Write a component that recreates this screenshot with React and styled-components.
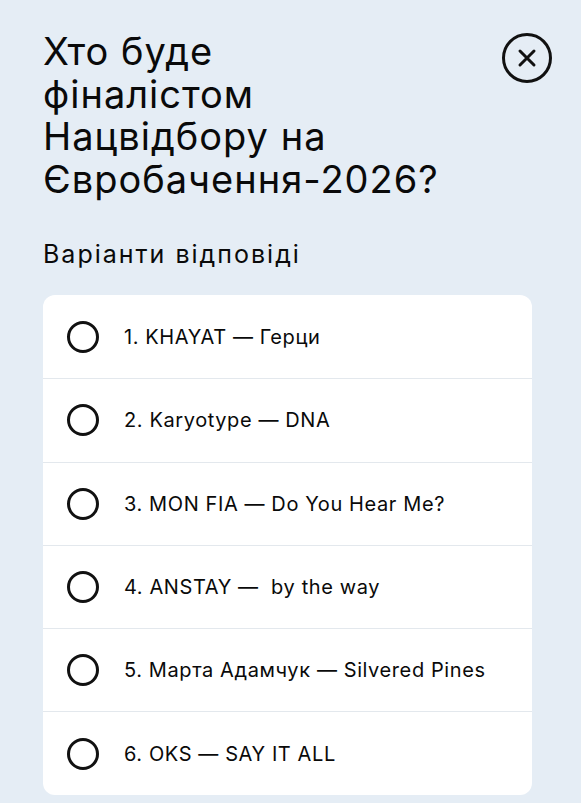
import React from 'react';
import styled, { createGlobalStyle } from 'styled-components';

const GlobalStyle = createGlobalStyle`
  html, body {
    margin: 0;
    padding: 0;
    background: #e5edf5;
  }
  body {
    font-family: Inter, "Noto Sans", "Liberation Sans", sans-serif;
    color: #0a0a0a;
  }
`

const Page = styled.div`
  width: 581px;
  height: 803px;
  box-sizing: border-box;
  padding: 30px 29px 0 43px;
  display: flex;
  flex-direction: column;
  overflow: hidden;
`

const Header = styled.div`
  display: flex;
  justify-content: space-between;
  align-items: flex-start;
`

const Title = styled.h1`
  margin: 0;
  font-size: 38px;
  line-height: 42.5px;
  font-weight: 400;
  letter-spacing: 1px;
`

const CloseButton = styled.button`
  width: 50px;
  height: 50px;
  margin-top: 3px;
  padding: 0;
  border: 3px solid #111;
  border-radius: 50%;
  background: transparent;
  display: flex;
  align-items: center;
  justify-content: center;
  box-sizing: border-box;
  cursor: pointer;
`

const Subtitle = styled.h2`
  margin: 39px 0 0;
  font-size: 25px;
  line-height: 30px;
  font-weight: 400;
  letter-spacing: 2px;
`

const Card = styled.div`
  margin-top: 26px;
  margin-right: 20px;
  background: #fff;
  border-radius: 12px;
  overflow: hidden;
`

const Option = styled.label`
  display: flex;
  align-items: center;
  height: 83.3px;
  padding-left: 24px;
  gap: 25px;
  box-sizing: border-box;
  border-top: ${p => (p.$first ? 'none' : '1.5px solid #e3e8ed')};
  cursor: pointer;
`

const Radio = styled.span`
  width: 32px;
  height: 32px;
  border: 3px solid #111;
  border-radius: 50%;
  box-sizing: border-box;
  flex-shrink: 0;
`

const OptionText = styled.span`
  font-size: 20px;
  letter-spacing: 0.6px;
  white-space: pre;
`

const options = [
  '1. KHAYAT — Герци',
  '2. Karyotype — DNA',
  '3. MON FIA — Do You Hear Me?',
  '4. ANSTAY —  by the way',
  '5. Марта Адамчук — Silvered Pines',
  '6. OKS — SAY IT ALL',
]

export default function App() {
  return (
    <>
      <GlobalStyle />
      <Page>
        <Header>
          <Title>
            Хто буде<br />
            фіналістом<br />
            Нацвідбору на<br />
            Євробачення-2026?
          </Title>
          <CloseButton aria-label="Закрити">
            <svg width="20" height="20" viewBox="0 0 20 20">
              <path d="M3 3 L17 17 M17 3 L3 17" stroke="#111" strokeWidth="3" strokeLinecap="round" />
            </svg>
          </CloseButton>
        </Header>
        <Subtitle>Варіанти відповіді</Subtitle>
        <Card>
          {options.map((o, i) => (
            <Option key={o} $first={i === 0}>
              <Radio />
              <OptionText>{o}</OptionText>
            </Option>
          ))}
        </Card>
      </Page>
    </>
  )
}
